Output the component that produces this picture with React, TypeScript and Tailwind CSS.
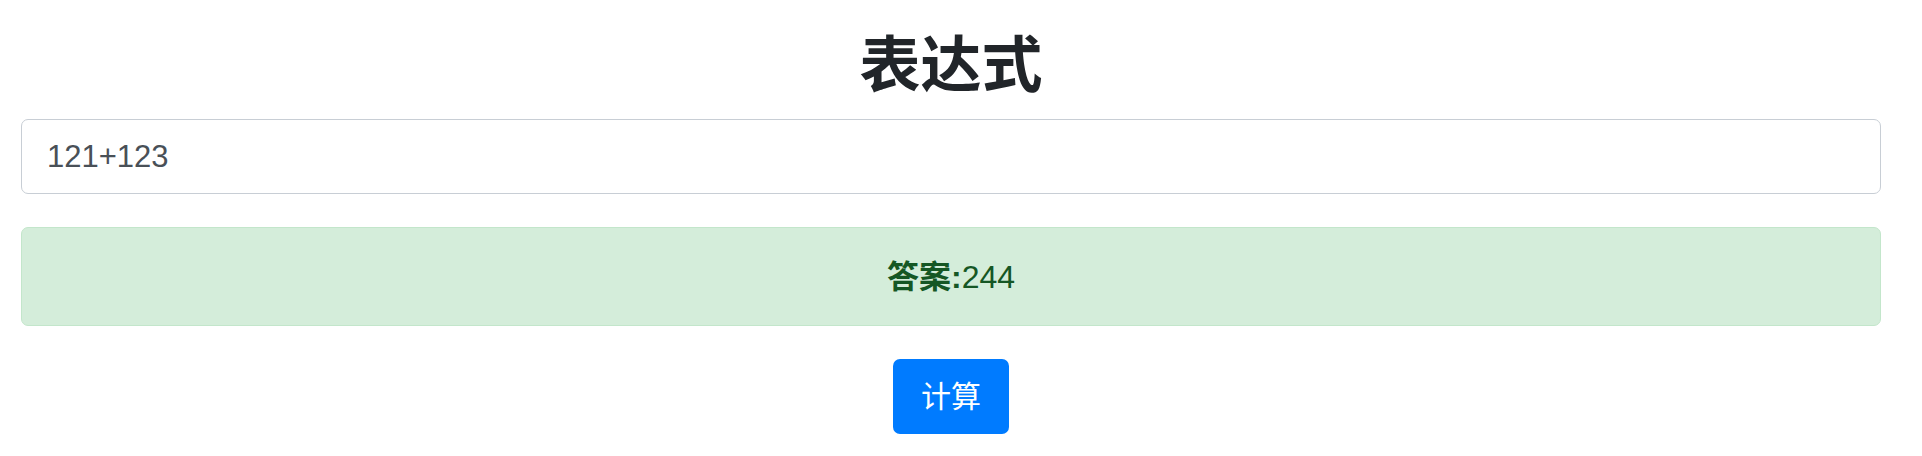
import { useState } from "react";

const FONT = "font-['Liberation_Sans','Noto_Sans_CJK_SC',sans-serif]";

export default function App() {
  const [expr, setExpr] = useState("121+123");
  const [answer, setAnswer] = useState("244");

  const handleCalc = () => {
    const m = expr.match(/^\s*(-?\d+(?:\.\d+)?)\s*([+\-*/])\s*(-?\d+(?:\.\d+)?)\s*$/);
    if (!m) return;
    const a = Number(m[1]);
    const b = Number(m[3]);
    const ops: Record<string, number> = { "+": a + b, "-": a - b, "*": a * b, "/": a / b };
    setAnswer(String(ops[m[2]]));
  };

  return (
    <div className={`${FONT} min-h-[456px] w-full bg-white pl-[21px] pr-[41px]`}>
      <h1 className="pt-[33px] text-center text-[61px] font-bold leading-[67px] text-[#212529]">
        表达式
      </h1>
      <input
        type="text"
        value={expr}
        onChange={(e) => setExpr(e.target.value)}
        className="mt-[19px] block h-[75px] w-full rounded-[7px] border-[1.5px] border-[#c8ced5] bg-white px-[25px] text-[31px] text-[#495057] outline-none"
      />
      <div className="mt-[33px] flex h-[99px] items-center justify-center rounded-[7px] border-[1.5px] border-[#c3e6cb] bg-[#d4edda] text-[32px] text-[#155724]">
        <span>
          <strong className="font-bold">答案:</strong>
          {answer}
        </span>
      </div>
      <div className="mt-[33px] flex justify-center">
        <button
          type="button"
          onClick={handleCalc}
          className="h-[75px] w-[116px] rounded-[7px] bg-[#007bff] text-[30px] text-white"
        >
          计算
        </button>
      </div>
    </div>
  );
}
